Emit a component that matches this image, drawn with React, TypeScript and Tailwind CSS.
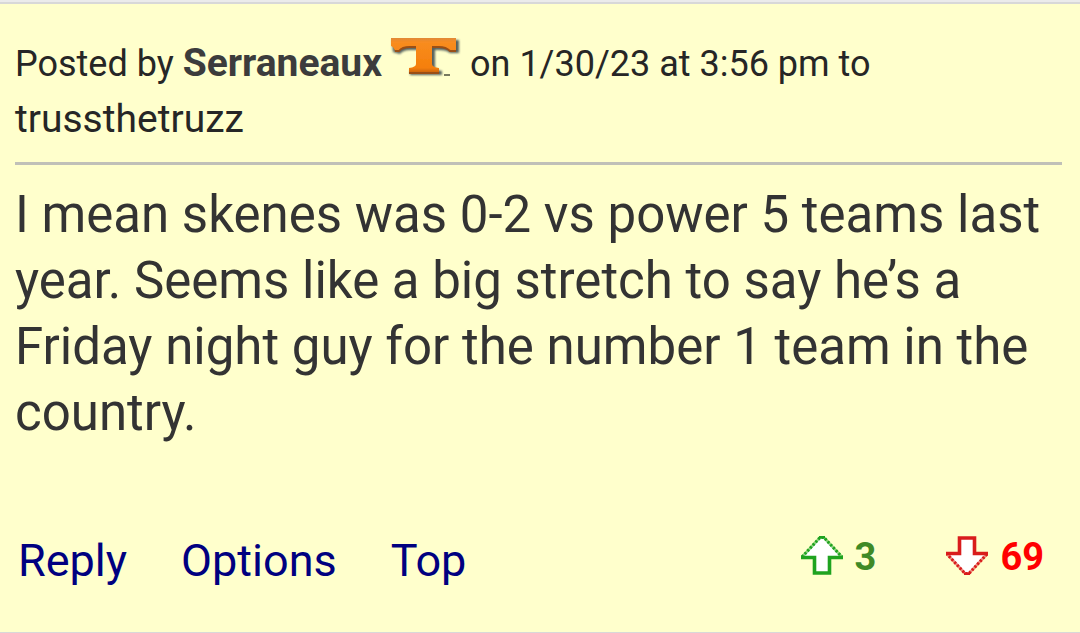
function TeamLogo() {
  return (
    <svg viewBox="0 0 72 44" className="mx-2 inline-block h-11 w-[72px] align-[-5px]" role="img" aria-label="Tennessee">
      <defs>
        <filter id="logo-shadow" x="-10%" y="-10%" width="125%" height="130%">
          <feGaussianBlur stdDeviation="1" />
        </filter>
        <filter id="logo-soft" x="-10%" y="-10%" width="120%" height="120%">
          <feGaussianBlur stdDeviation="0.6" />
        </filter>
        <linearGradient id="logo-fill" x1="0" y1="0" x2="0" y2="1">
          <stop offset="0" stopColor="#e08a38" />
          <stop offset="0.12" stopColor="#f88c20" />
          <stop offset="0.85" stopColor="#f57f0a" />
          <stop offset="1" stopColor="#c8620a" />
        </linearGradient>
      </defs>
      <path
        d="M2 3H69V16H60Q57 13 49 13H45V30Q45 33 52 34V38H20V33Q28 33 29 30V13H20Q13 13 10 17L3 15Z"
        fill="#37444c"
        opacity="0.85"
        filter="url(#logo-shadow)"
      />
      <g filter="url(#logo-soft)">
        <path
          d="M1 1H66V14H60Q56 10 49 10H42V27Q42 30 49 31V36H19V31Q26 30 26 27V10H20Q12 10 9 14H5Q4 10 1 9Z"
          fill="url(#logo-fill)"
        />
        <path d="M5 14H9Q12 10 20 10H26M42 10H49Q56 10 60 14H66M19 36H49" fill="none" stroke="#9a4f18" strokeWidth="1.8" />
        <path d="M54 38H60" stroke="#77795f" strokeWidth="2" />
      </g>
    </svg>
  );
}

function VoteArrow({ down = false }: { down?: boolean }) {
  const color = down ? "#d91c1c" : "#1fa31f";
  return (
    <svg viewBox="0 0 42 40" className={down ? "mb-0.5 h-10 w-[42px] rotate-180" : "mb-1 h-10 w-[42px]"} aria-hidden="true">
      <path d="M21 1L2 21V23H13V38H29V23H40V21Z" fill="#ffffff" />
      <path d="M0 22.5H13.5V38H28.5V22.5H42" fill="none" stroke={color} strokeWidth="3.6" />
      <path d="M1 22L19 2.5H23L41 22" fill="none" stroke={color} strokeWidth="2.6" opacity="0.5" />
      <path d="M1 22L19 2.5H23L41 22" fill="none" stroke={color} strokeWidth="3" strokeDasharray="2.2 1.8" />
      <path d="M18 2.2H24" stroke={color} strokeWidth="2.4" />
    </svg>
  );
}

const actions = ["Reply", "Options", "Top"];

export default function App() {
  return (
    <div className="border-t-2 border-[#ebebeb]">
      <article className="border-t-2 border-b border-[#d8d8d8] bg-[#ffffcc] pt-8 pr-[18px] pb-[41px] pl-[15px] font-['Roboto',sans-serif] text-[#333333]">
        <header className="border-b-[3px] border-[#c0c0b8] pb-3.5 text-[36px] leading-[55px] text-[#262626]">
          Posted by{" "}
          <a href="#serraneaux" className="text-[39px] font-bold text-[#3c3c3c]">Serraneaux</a>
          <TeamLogo />
          on 1/30/23 at 3:56 pm to{" "}
          <a href="#trussthetruzz" className="text-[39px]">trussthetruzz</a>
        </header>
        <p className="pt-[17px] text-[51px] leading-[66px]">
          I mean skenes was 0-2 vs power 5 teams last year. Seems like a big stretch to say he’s a Friday night guy for the number 1 team in the country.
        </p>
        <footer className="mt-[85px] flex items-center justify-between pr-[18px] pl-[3px]">
          <nav className="flex gap-[54px] text-[45px] leading-[60px] text-[#000080]">
            {actions.map((action) => (
              <a key={action} href={`#${action.toLowerCase()}`}>{action}</a>
            ))}
          </nav>
          <div className="flex gap-[70px] pb-2 text-[38px] leading-[52px] font-bold">
            <button type="button" aria-label="Upvote, 3" className="flex items-center gap-3 text-[#3f8a26]">
              <VoteArrow />3
            </button>
            <button type="button" aria-label="Downvote, 69" className="flex items-center gap-3 text-[#ff0000]">
              <VoteArrow down />69
            </button>
          </div>
        </footer>
      </article>
    </div>
  );
}
